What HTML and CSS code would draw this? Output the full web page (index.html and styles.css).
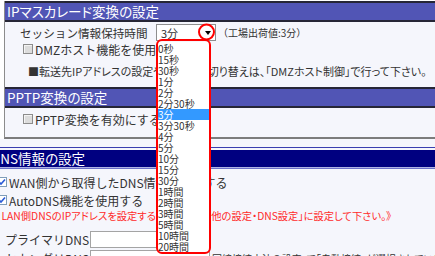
FILE: index.html
```html
<!DOCTYPE html>
<html lang="ja">
<head>
<meta charset="UTF-8">
<title>IPマスカレード変換の設定</title>
<link rel="stylesheet" href="styles.css">
</head>
<body>

<div class="page">
    <div class="panel">
        <h2 class="bar">IPマスカレード変換の設定</h2>
        <div class="body body-masq">
            <div class="row session">
                <span class="label">セッション情報保持時間</span>
                <span class="select">3分<span class="arrow"></span></span>
                <span class="note">（工場出荷値:3分）</span>
            </div>
            <div class="row check-row">
                <span class="box"></span>DMZホスト機能を使用する
            </div>
            <div class="info">■転送先IPアドレスの設定や有効無効切り替えは、「DMZホスト制御」で行って下さい。</div>
        </div>
        <h2 class="bar">PPTP変換の設定</h2>
        <div class="body body-pptp">
            <div class="row check-row">
                <span class="box"></span>PPTP変換を有効にする
            </div>
        </div>
    </div>

    <div class="dns">
        <div class="dns-head"><h2 class="dns-bar">DNS情報の設定</h2></div>
        <div class="row dns-check first">
            <span class="box checked"><svg width="8" height="8" viewBox="0 0 8 8"><path d="M1 4 L3 6 L7 1.5" fill="none" stroke="#2a5bd7" stroke-width="1.6"/></svg></span>WAN側から取得したDNS情報を使用する
        </div>
        <div class="row dns-check">
            <span class="box checked"><svg width="8" height="8" viewBox="0 0 8 8"><path d="M1 4 L3 6 L7 1.5" fill="none" stroke="#2a5bd7" stroke-width="1.6"/></svg></span>AutoDNS機能を使用する
        </div>
        <div class="warn">《 LAN側DNSのIPアドレスを設定する場合は「その他の設定・DNS設定」に設定して下さい。》</div>
        <div class="row dns-field">
            <span class="field-label">プライマリDNS</span>
            <span class="input"></span>
        </div>
        <div class="row dns-field">
            <span class="field-label">セカンダリDNS</span>
            <span class="input"></span>
            <span class="hint">回線接続方法の設定」で「自動接続」が選択されている場合</span>
        </div>
    </div>
</div>

<ul class="dropdown">
    <li>0秒</li>
    <li>15秒</li>
    <li>30秒</li>
    <li>1分</li>
    <li>2分</li>
    <li>2分30秒</li>
    <li class="selected">3分</li>
    <li>3分30秒</li>
    <li>4分</li>
    <li>5分</li>
    <li>10分</li>
    <li>15分</li>
    <li>30分</li>
    <li>1時間</li>
    <li>2時間</li>
    <li>3時間</li>
    <li>5時間</li>
    <li>10時間</li>
    <li>20時間</li>
</ul>

<svg class="marks" width="435" height="256" viewBox="0 0 435 256">
    <circle cx="206.5" cy="32" r="7.5" fill="none" stroke="#ff0000" stroke-width="2"/>
    <rect x="157" y="40" width="53" height="213" rx="5" fill="none" stroke="#ff0000" stroke-width="2"/>
</svg>

</body>
</html>
```

FILE: styles.css
```css
* { box-sizing: border-box; }
body { margin: 0; width: 435px; height: 256px; overflow: hidden; position: relative; background: #fff; color: #333; font-family: "Noto Sans CJK JP", "Noto Sans", sans-serif; font-size: 12px; }
.page { width: 620px; padding-top: 1px; }

.panel { margin-left: 4px; border-left: 1px solid #8c8c8c; border-bottom: 2px solid #7c7c7c; background: #f5f6fc; }
.bar { margin: 0; height: 21px; border-top: 2px solid #262636; border-bottom: 2px solid #262636; background: #5155b5; color: #fff; font-size: 13.5px; font-weight: normal; font-feature-settings: "palt"; line-height: 17px; padding-left: 2px; white-space: nowrap; }
.body { padding-left: 15px; }
.body-masq { height: 65px; padding-top: 2px; }
.body-pptp { height: 29px; padding-top: 3px; }

.row { display: flex; align-items: center; white-space: nowrap; }
.session { height: 17px; }
.label { width: 136px; font-size: 11.6px; }
.select { width: 60px; height: 17px; border: 1px solid #8e8e8e; background: #fff; display: flex; align-items: center; justify-content: space-between; padding: 0 4px 0 4px; font-size: 11px; }
.arrow { width: 0; height: 0; border-left: 3px solid transparent; border-right: 3px solid transparent; border-top: 4px solid #000; }
.note { margin-left: 2px; font-size: 10px; }

.check-row { height: 16px; padding-left: 3px; }
.box { width: 10px; height: 10px; margin-right: 2px; border: 1px solid #8c8c8c; background: #dcdcdc; box-shadow: inset 1px 1px 0 #f4f4f4; display: flex; align-items: center; justify-content: center; flex: none; }
.box.checked { background: #fff; border-color: #7f9db9; box-shadow: none; }
.info { margin-top: 7px; padding-left: 8px; height: 14px; line-height: 14px; font-size: 11px; font-feature-settings: "palt"; white-space: nowrap; }

.dns { margin-left: -12px; padding-top: 8px; background: #f5f6fc; }
.dns-head { border-top: 1px solid #3a3eb0; padding-top: 2px; border-bottom: 1px solid #6c70c8; }
.dns-bar { margin: 0; height: 18px; background: #000080; border-bottom: 1px solid #b0b4e4; color: #fff; font-size: 13.5px; font-weight: normal; font-feature-settings: "palt"; line-height: 17px; padding-left: 3px; white-space: nowrap; }
.dns-check { height: 16px; padding-left: 9px; margin-top: 2px; }
.dns-check.first { margin-top: 5px; }
.warn { margin-top: 1px; height: 14px; line-height: 14px; padding-left: 6px; color: #ff2a2a; font-size: 10.3px; font-feature-settings: "palt"; white-space: nowrap; }
.dns-field { height: 17px; margin-top: 8px; padding-left: 17px; }
.dns-field + .dns-field { margin-top: 2px; }
.field-label { width: 85px; }
.input { width: 120px; height: 17px; border: 1px solid #a4a4a4; background: #fff; }
.hint { margin-left: 2px; font-size: 10px; font-feature-settings: "palt"; }

.dropdown { position: absolute; left: 157px; top: 42px; width: 52px; margin: 0; padding: 1px 0 0; list-style: none; background: #fff; font-size: 10px; }
.dropdown li { height: 11px; line-height: 11px; padding-left: 1px; white-space: nowrap; }
.dropdown li.selected { background: #3399ff; color: #fff; }
.marks { position: absolute; left: 0; top: 0; }
```
